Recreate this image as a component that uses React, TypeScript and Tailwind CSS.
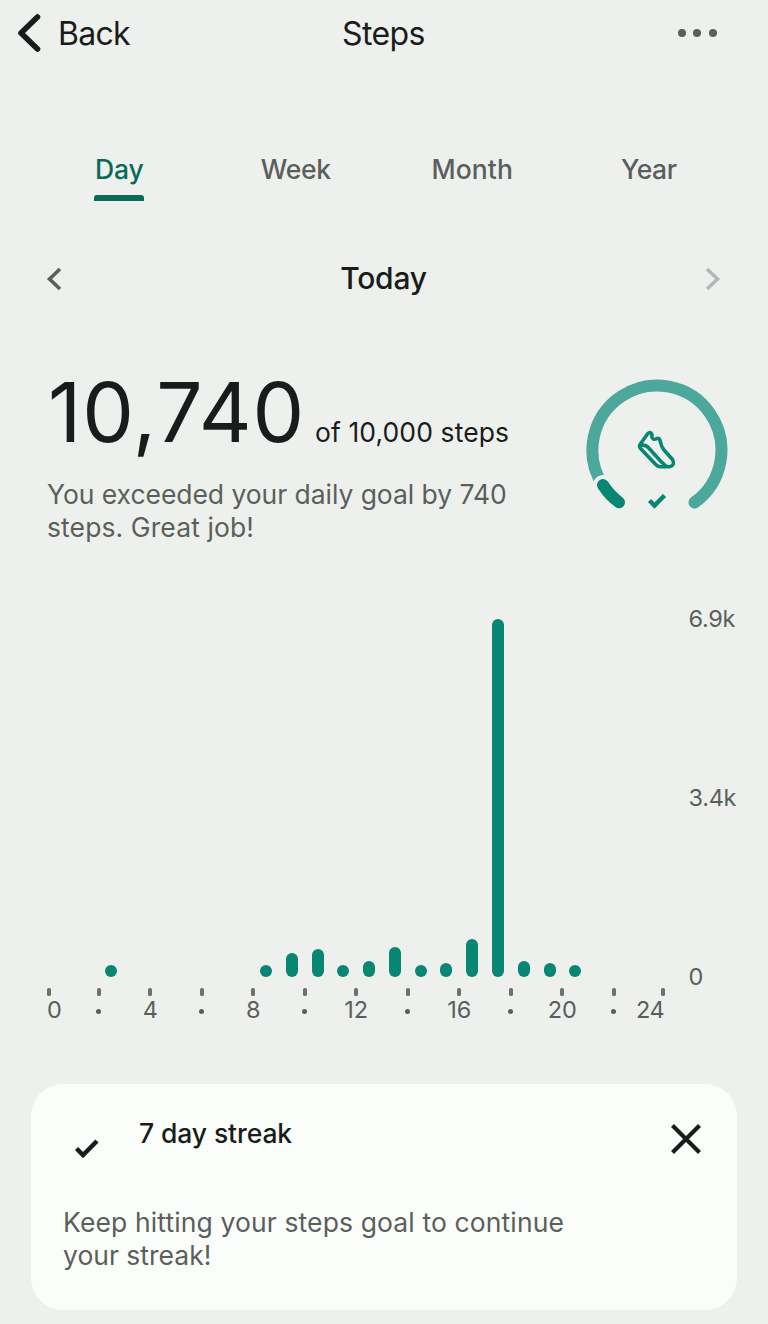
import { useState } from 'react';
import { clsx } from 'clsx';

const TABS = [
  { name: 'Day', tracking: 'tracking-[-0.1px]' },
  { name: 'Week', tracking: 'tracking-[-0.3px]' },
  { name: 'Month', tracking: 'tracking-[0.1px]' },
  { name: 'Year', tracking: 'tracking-[-0.4px]' },
];

// bar height in px for each hour of the day
const HOURS = [0, 0, 12, 0, 0, 0, 0, 0, 12, 24, 28, 12, 16, 30, 12, 14, 38, 358, 16, 14, 12, 0, 0, 0];

const TICKS = ['', '4', '', '8', '', '12', '', '16', '', '20', ''];

function Header() {
  return (
    <header className="grid h-[66px] grid-cols-3 items-center pr-[51px] pl-[17px] text-[32px] text-[#1a1c1b]">
      <button type="button" className="flex items-center gap-[17px] text-left">
        <svg width="24" height="40" viewBox="0 0 24 40" fill="none" stroke="currentColor" strokeWidth="5.6" strokeLinecap="round" strokeLinejoin="round">
          <path d="M20.5 4 4 20l16.500 16" />
        </svg>
        <span className="pt-[2px] tracking-[-0.75px]">Back</span>
      </button>
      <h1 className="pt-px pl-[33px] text-center tracking-[-0.6px]">Steps</h1>
      <button type="button" aria-label="More" className="flex justify-end gap-[7.500px]">
        <span className="size-2 rounded-full bg-[#5a5f5c]" />
        <span className="size-2 rounded-full bg-[#5a5f5c]" />
        <span className="size-2 rounded-full bg-[#5a5f5c]" />
      </button>
    </header>
  );
}

function Tabs() {
  const [active, setActive] = useState('Day');

  return (
    <nav className="mt-[78px] grid grid-cols-4 px-[31px]">
      {TABS.map(({ name, tracking }) => (
        <button
          key={name}
          type="button"
          onClick={() => setActive(name)}
          className={clsx(
            'flex h-[57px] flex-col items-center text-[26.500px] leading-[51px] font-medium',
            tracking,
            active === name ? 'text-[#076b58]' : 'text-[#5a5f5c]'
          )}
        >
          <span className="h-[51px]">{name}</span>
          {active === name && <span className="h-[6px] w-[50px] rounded-t-[3px] bg-[#076b58]" />}
        </button>
      ))}
    </nav>
  );
}

function DatePicker() {
  return (
    <div className="mt-[47px] flex h-[61px] items-center justify-between pr-[47px] pl-[46px]">
      <svg width="16" height="24" viewBox="0 0 16 24" fill="none" stroke="#5a5f5c" strokeWidth="3.600">
        <path d="M14 2 3.500 12 14 22" />
      </svg>
      <h2 className="text-[30px] font-medium tracking-[-0.2px] text-[#1a1c1b]">Today</h2>
      <svg width="16" height="24" viewBox="0 0 16 24" fill="none" stroke="#b4b7b5" strokeWidth="3.600">
        <path d="M2 2 12.500 12 2 22" />
      </svg>
    </div>
  );
}

function GoalGauge() {
  return (
    <svg width="144" height="136" viewBox="0 0 144 136" fill="none" className="mt-[2px] shrink-0">
      <g strokeLinecap="round">
        <path d="M17.700 107A64.500 64.500 0 1 1 109.500 124.500" stroke="#4ba89a" strokeWidth="12" />
        <path d="M18 107A64.500 64.500 0 0 0 34 124.300" stroke="#eef0ed" strokeWidth="20" />
        <path d="M18 107A64.500 64.500 0 0 0 34 124.300" stroke="#078773" strokeWidth="12" />
      </g>
      <g stroke="#078773" strokeWidth="3.600" strokeLinejoin="round" strokeLinecap="round">
        <path d="M62.500 56 55.200 66.200Q53.700 68.500 55.700 70.700L71 86.800Q73 88.800 75.500 88.800H84.500Q90.500 87.500 87.500 81.500L79 72Q76.500 69 75.700 65L74.800 61.800Q74.300 60 72 60.500 67.500 62.800 66.700 58.500L67 56.500Q65.500 52.800 62.500 56Z" />
        <path d="M55.500 67.300Q60.500 66.500 63.500 69.800L75.500 83Q79 86.500 81 88" />
      </g>
      <path d="m64.500 122.500 5 5L79.500 117.500" stroke="#078773" strokeWidth="4.500" />
    </svg>
  );
}

function Summary() {
  return (
    <section className="mt-[67px] flex h-[180px] justify-between pr-[39px] pl-[48px]">
      <div>
        <p className="-mt-[6px] flex h-[86px] items-baseline leading-[86px] text-[#1a1c1b]">
          <span className="w-[267px] text-[82px] tracking-[0.9px]">10,740</span>
          <span className="text-[26.500px] tracking-[0.1px] whitespace-nowrap">of 10,000 steps</span>
        </p>
        <p className="mt-[22px] -ml-px flex flex-col text-[26.500px] leading-[33px] whitespace-nowrap text-[#5a5f5c]">
          <span className="tracking-[-0.05px]">You exceeded your daily goal by 740</span>
          <span className="tracking-[0.1px]">steps. Great job!</span>
        </p>
      </div>
      <GoalGauge />
    </section>
  );
}

function StepsChart() {
  return (
    <section className="mt-[51px] flex h-[420px] pr-[20px] pl-[47px] text-[23.500px] text-[#5a5f5c]">
      <div className="w-[618.500px]">
        <div className="grid h-[370px] grid-cols-24 items-end justify-items-center">
          {HOURS.map((height, hour) => (
            <span key={hour} className="w-3 rounded-full bg-[#078773]" style={{ height }} />
          ))}
        </div>
        <div className="mt-[11px] flex justify-between leading-[28px]">
          <div className="flex w-[26px] flex-col">
            <span className="h-[8px] w-[4px] rounded-[1.500px] bg-[#6d716f]" />
            <span>0</span>
          </div>
          <div className="grid grow grid-cols-11">
            {TICKS.map((label, i) => (
              <div key={i} className="flex flex-col items-center">
                <span className="h-[8px] w-[4px] rounded-[1.500px] bg-[#6d716f]" />
                {label ? (
                  <span>{label}</span>
                ) : (
                  <span className="mt-[12.500px] size-[5px] rounded-full bg-[#5a5f5c]" />
                )}
              </div>
            ))}
          </div>
          <div className="flex w-[26px] flex-col items-end pr-px">
            <span className="h-[8px] w-[4px] rounded-[1.500px] bg-[#6d716f]" />
            <span className="tracking-[-0.3px]">24</span>
          </div>
        </div>
      </div>
      <div className="-mt-[2px] ml-[23px] flex h-[386px] flex-col justify-between leading-[28px] tracking-[-0.3px]">
        <span>6.9k</span>
        <span>3.4k</span>
        <span>0</span>
      </div>
    </section>
  );
}

function StreakCard() {
  return (
    <section className="mx-[31px] mt-[57px] h-[226px] rounded-[32px] bg-[#fbfdfa] pt-[32px] pr-[35px] pl-[32px]">
      <div className="flex h-[90px]">
        <svg width="26" height="22" viewBox="0 0 26 22" fill="none" stroke="#1a1c1b" strokeWidth="4.500" className="mt-[21px] ml-[11px]">
          <path d="m2.500 11.500 6.500 6.500L23 4" />
        </svg>
        <h3 className="ml-[39px] grow text-[26.500px] leading-[34px] font-medium tracking-[-0.1px] text-[#1a1c1b]">7 day streak</h3>
        <button type="button" aria-label="Dismiss" className="flex h-[46px]">
          <svg width="32" height="32" viewBox="0 0 32 32" fill="none" stroke="#1a1c1b" strokeWidth="4.200" className="mt-[7px]">
            <path d="m2.500 2.500 27 27M29.500 2.500l-27 27" />
          </svg>
        </button>
      </div>
      <p className="flex flex-col text-[26.500px] leading-[33px] whitespace-nowrap text-[#5a5f5c]">
        <span className="tracking-[0.12px]">Keep hitting your steps goal to continue</span>
        <span>your streak!</span>
      </p>
    </section>
  );
}

export default function App() {
  return (
    <main className="h-[1324px] w-[768px] overflow-hidden bg-[#eef0ed] font-['Inter',sans-serif]">
      <Header />
      <Tabs />
      <DatePicker />
      <Summary />
      <StepsChart />
      <StreakCard />
    </main>
  );
}
